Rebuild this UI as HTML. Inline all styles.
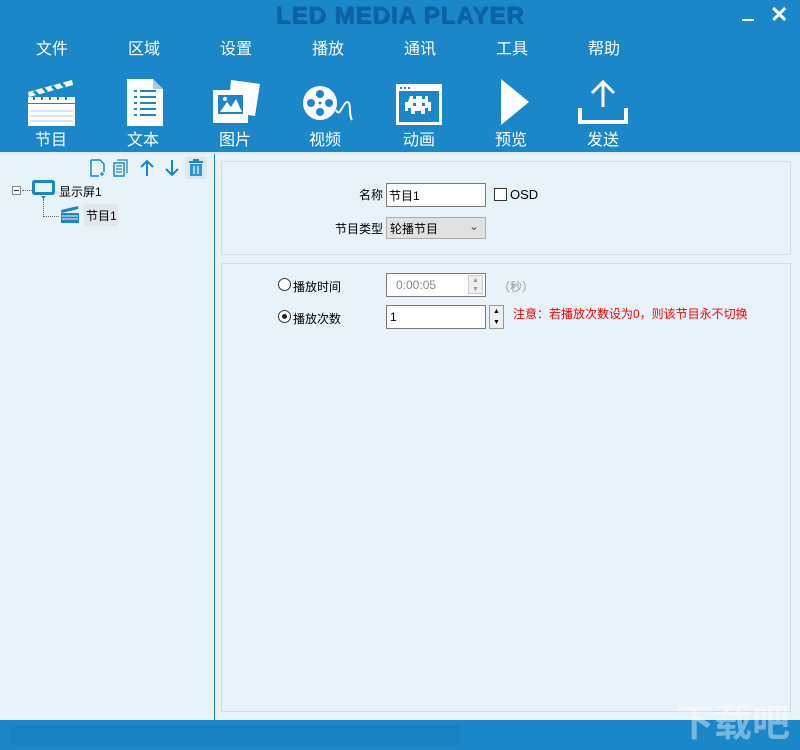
<!DOCTYPE html>
<html style="width:800px;height:750px;overflow:hidden"><head><meta charset="utf-8"><style>
*{margin:0;padding:0;box-sizing:border-box}
body{width:800px;height:750px;position:relative;overflow:hidden;background:#e8f2f9;font-family:"Liberation Sans","Noto Sans CJK SC",sans-serif;font-size:12px;color:#000}
.top{position:absolute;left:0;top:0;width:800px;height:152px;background:#1b87c8}
.title{position:absolute;left:0;width:800px;top:2px;text-align:center;font:900 24px "Liberation Sans",sans-serif;color:#0b64a6;letter-spacing:1px;text-shadow:1px 1px 0 #0a5d99}
.menu{position:absolute;top:35px;color:#fff;font-size:16px}
.tb{position:absolute;top:126px;color:#fff;font-size:16px}
.ic{position:absolute}
.abs{position:absolute;white-space:nowrap}
.box{position:absolute;border:1px solid #d3dde5}
</style></head><body>
<div class="top">
<div class="title">LED MEDIA PLAYER</div>
<div class="abs" style="left:742px;top:19px;width:12px;height:2px;background:#fff"></div>
<div class="abs" style="left:770px;top:2px;color:#fff;font:bold 22px 'Liberation Sans',sans-serif">✕</div>
<div class="menu" style="left:36px">文件</div>
<div class="menu" style="left:128px">区域</div>
<div class="menu" style="left:220px">设置</div>
<div class="menu" style="left:312px">播放</div>
<div class="menu" style="left:404px">通讯</div>
<div class="menu" style="left:496px">工具</div>
<div class="menu" style="left:588px">帮助</div>
<svg class="ic" style="left:26px;top:78px" width="50" height="50" viewBox="0 0 50 50"><path d="M2 14 L46 2 L47 7 L3 19Z" fill="#fff"/><path d="M8 13l4 4M17 10l4 4M26 8l4 4M35 5l4 4" stroke="#1b87c8" stroke-width="3"/><rect x="2" y="19" width="47" height="6" fill="#fff"/><path d="M8 19v3M16 19v3M24 19v3M32 19v3M40 19v3" stroke="#1b87c8" stroke-width="2"/><rect x="2" y="26" width="47" height="22" fill="#fff"/><path d="M4 33h43M4 38h43M4 43h43" stroke="#a9cde6"/></svg>
<svg class="ic" style="left:126px;top:78px" width="40" height="50" viewBox="0 0 40 50"><path d="M1 1H27L37 11V48H1Z" fill="#fff"/><path d="M27 1V11H37" fill="#1b87c8" opacity=".4"/><path d="M8 13h3M14 13h16M8 19h3M14 19h16M8 25h3M14 25h16M8 31h3M14 31h16M8 37h3M14 37h16" stroke="#1b87c8" stroke-width="2"/></svg>
<svg class="ic" style="left:212px;top:78px" width="50" height="46" viewBox="0 0 50 46"><path d="M19 2 L48 6 L43 38 L36 37 V13 H18Z" fill="#fff"/><rect x="1" y="12" width="35" height="33" fill="#fff"/><rect x="6" y="17" width="25" height="19" fill="#1b87c8"/><path d="M8 34 L15 24 L19 29 L24 21 L30 34Z" fill="#fff"/><circle cx="13" cy="21" r="2" fill="#fff"/></svg>
<svg class="ic" style="left:302px;top:84px" width="52" height="40" viewBox="0 0 52 40"><circle cx="18" cy="19" r="17" fill="#fff"/><circle cx="18" cy="10" r="4" fill="#1b87c8"/><circle cx="18" cy="28" r="4" fill="#1b87c8"/><circle cx="9" cy="19" r="4" fill="#1b87c8"/><circle cx="27" cy="19" r="4" fill="#1b87c8"/><circle cx="18" cy="19" r="1.5" fill="#1b87c8"/><path d="M34 26 C38 34 40 20 45 18 C50 18 46 30 50 36" stroke="#fff" stroke-width="2" fill="none"/></svg>
<svg class="ic" style="left:396px;top:84px" width="46" height="42" viewBox="0 0 46 42"><rect x="1.5" y="1.5" width="43" height="38" fill="none" stroke="#fff" stroke-width="3"/><rect x="1" y="1" width="44" height="6" fill="#fff"/><path d="M4 4h2M8 4h2M12 4h2" stroke="#1b87c8" stroke-width="2"/><path d="M14 12h3v3h3v-3h6v3h3v-3h3v6h3v9h-3v-3h-3v6h-4v-3h-6v3h-4v-6h-3v3h-3v-9h3z" fill="#fff"/><rect x="17" y="19" width="3" height="3" fill="#1b87c8"/><rect x="26" y="19" width="3" height="3" fill="#1b87c8"/></svg>
<svg class="ic" style="left:500px;top:78px" width="32" height="48" viewBox="0 0 32 48"><path d="M1 1 L29 24 L1 47Z" fill="#fff"/></svg>
<svg class="ic" style="left:578px;top:80px" width="50" height="44" viewBox="0 0 50 44"><path d="M25 2V27M14 13L25 2L36 13" stroke="#fff" stroke-width="3" fill="none"/><path d="M2 28V42H48V28" stroke="#fff" stroke-width="4" fill="none"/></svg>
<div class="tb" style="left:35px">节目</div>
<div class="tb" style="left:127px">文本</div>
<div class="tb" style="left:219px">图片</div>
<div class="tb" style="left:309px">视频</div>
<div class="tb" style="left:403px">动画</div>
<div class="tb" style="left:495px">预览</div>
<div class="tb" style="left:587px">发送</div>
</div>
<div class="abs" style="left:214px;top:152px;width:1px;height:570px;background:#1b87c8"></div>
<div class="abs" style="left:0;top:152px;width:800px;height:2px;background:#e0ecf5"></div>
<svg class="abs" style="left:88px;top:157px" width="122" height="22" viewBox="0 0 122 22"><path d="M3 3h9l4 4v8M3 3v16h8" stroke="#1b87c8" stroke-width="1.5" fill="none"/><path d="M12 17h4M14 15v4" stroke="#1b87c8" stroke-width="1.3"/><rect x="26" y="6" width="10" height="13" fill="none" stroke="#1b87c8" stroke-width="1.5"/><path d="M29 3h10v13M28 9h6M28 12h6M28 15h6" stroke="#1b87c8" stroke-width="1.3" fill="none"/><path d="M59 19V4M53 10l6-6 6 6" stroke="#1b87c8" stroke-width="2" fill="none"/><path d="M84 3v15M78 12l6 6 6-6" stroke="#1b87c8" stroke-width="2" fill="none"/><rect x="97" y="0" width="22" height="22" fill="#dde8f1"/><path d="M101 5h14M105 3h6" stroke="#1b87c8" stroke-width="2"/><rect x="102" y="7" width="12" height="12" fill="#2b97dc"/><path d="M106 9v8M110 9v8" stroke="#dde8f1" stroke-width="1.5"/></svg>
<div class="abs" style="left:12px;top:186px;width:9px;height:9px;border:1px solid #888;background:#fff"></div>
<div class="abs" style="left:14px;top:190px;width:5px;height:1px;background:#333"></div>
<div class="abs" style="left:22px;top:190px;width:10px;border-top:1px dotted #666"></div>
<svg class="abs" style="left:32px;top:180px" width="24" height="20" viewBox="0 0 24 20"><rect x="1.5" y="1.5" width="20" height="12" rx="1" fill="none" stroke="#1b87c8" stroke-width="3"/><path d="M9 16h5l-2.5 3z" fill="#1b87c8"/></svg>
<div class="abs" style="left:59px;top:183px;font-size:12px">显示屏1</div>
<div class="abs" style="left:43px;top:199px;height:18px;border-left:1px dotted #666"></div>
<div class="abs" style="left:43px;top:216px;width:16px;border-top:1px dotted #666"></div>
<svg class="abs" style="left:60px;top:205px" width="20" height="18" viewBox="0 0 20 18"><path d="M1 5L18 1l.5 3L1.5 8z" fill="#1b87c8"/><rect x="1" y="8" width="18" height="10" fill="#1b87c8"/><path d="M2 11h16M2 14h16" stroke="#e8f2f9"/></svg>
<div class="abs" style="left:84px;top:204px;width:34px;height:22px;background:#e2e7ec"></div>
<div class="abs" style="left:86px;top:207px">节目1</div>
<div class="box" style="left:221px;top:161px;width:570px;height:94px"></div>
<div class="box" style="left:221px;top:263px;width:570px;height:449px"></div>
<div class="abs" style="left:359px;top:186px">名称</div>
<div class="abs" style="left:386px;top:183px;width:100px;height:24px;border:1px solid #7a7a7a;background:#fff;padding:3px 2px">节目1</div>
<div class="abs" style="left:494px;top:188px;width:13px;height:13px;border:1px solid #333;background:#fff"></div>
<div class="abs" style="left:510px;top:187px;font-size:13px">OSD</div>
<div class="abs" style="left:335px;top:220px">节目类型</div>
<div class="abs" style="left:386px;top:217px;width:100px;height:22px;border:1px solid #adadad;background:#e1e1e1;padding:2px 3px">轮播节目<span style="position:absolute;right:6px;top:1px;color:#555">⌄</span></div>
<div class="abs" style="left:278px;top:278px;width:13px;height:13px;border:1px solid #333;border-radius:50%;background:#fff"></div>
<div class="abs" style="left:293px;top:278px">播放时间</div>
<div class="abs" style="left:386px;top:273px;width:100px;height:24px;border:1px solid #7a7a7a;background:#fff;padding:4px 9px;color:#888">0:00:05</div>
<div class="abs" style="left:468px;top:275px;width:15px;height:19px;border:1px solid #ccc;background:#eee;font-size:7px;color:#999;text-align:center;line-height:9px">▲<br>▼</div>
<div class="abs" style="left:498px;top:278px;color:#999">（秒）</div>
<div class="abs" style="left:278px;top:310px;width:13px;height:13px;border:1px solid #333;border-radius:50%;background:#fff"><div style="margin:3px;width:5px;height:5px;border-radius:50%;background:#222"></div></div>
<div class="abs" style="left:293px;top:310px">播放次数</div>
<div class="abs" style="left:386px;top:305px;width:100px;height:24px;border:1px solid #7a7a7a;background:#fff;padding:4px 3px">1</div>
<div class="abs" style="left:489px;top:305px;width:15px;height:24px;border:1px solid #999;background:#f0f0f0;font-size:7px;text-align:center;line-height:11px">▲<br>▼</div>
<div class="abs" style="left:513px;top:305px;color:#f00">注意：若播放次数设为0，则该节目永不切换</div>
<div class="abs" style="left:0;top:720px;width:800px;height:30px;background:#1b87c8"></div>
<div class="abs" style="left:10px;top:725px;width:450px;height:20px;background:#1981c2"></div>
<div class="abs" style="left:676px;top:700px;color:rgba(255,255,255,.4);font:bold 38px 'Noto Sans CJK SC',sans-serif;line-height:40px;white-space:nowrap">下载吧</div>
</body></html>
